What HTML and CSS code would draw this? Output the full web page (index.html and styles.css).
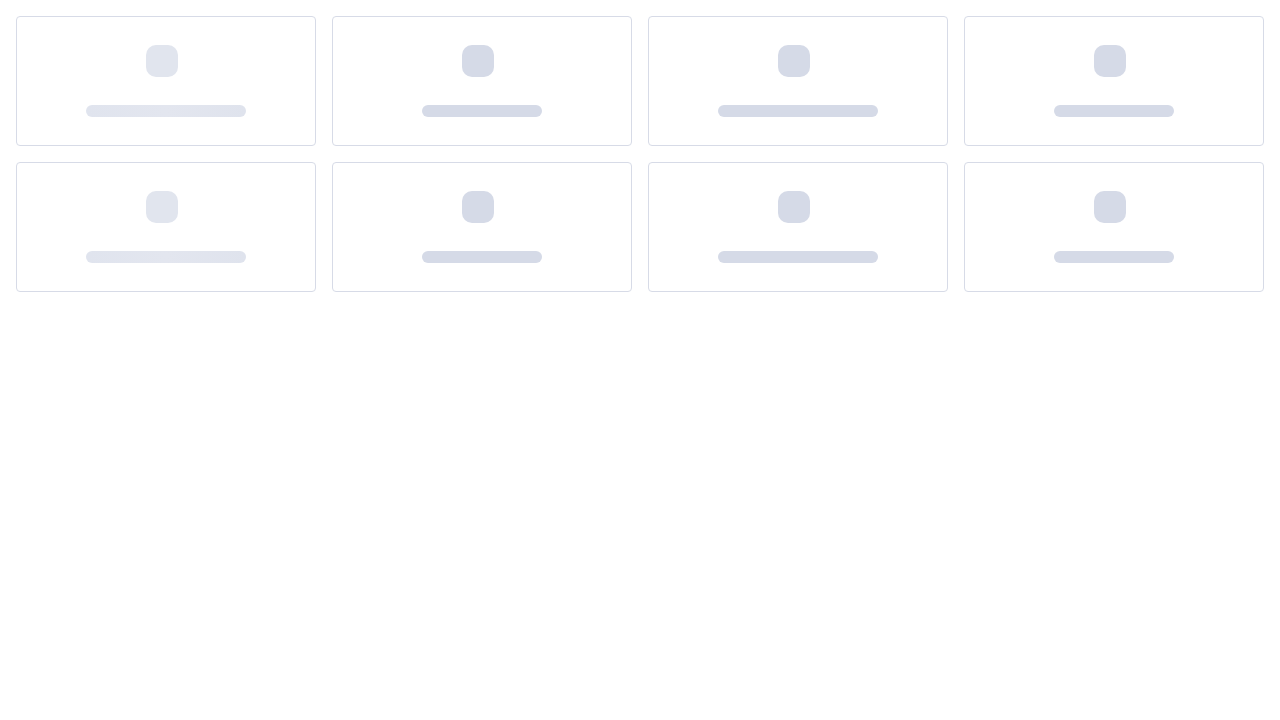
FILE: index.html
```html
<!DOCTYPE html>
<html lang="en">
<head>
<meta charset="utf-8">
<title>Loading</title>
<link rel="stylesheet" href="styles.css">
</head>
<body>
<main class="grid">
  <div class="card light"><span class="icon"></span><span class="bar wide"></span></div>
  <div class="card"><span class="icon"></span><span class="bar narrow"></span></div>
  <div class="card"><span class="icon"></span><span class="bar wide"></span></div>
  <div class="card"><span class="icon"></span><span class="bar narrow"></span></div>
  <div class="card light"><span class="icon"></span><span class="bar wide"></span></div>
  <div class="card"><span class="icon"></span><span class="bar narrow"></span></div>
  <div class="card"><span class="icon"></span><span class="bar wide"></span></div>
  <div class="card"><span class="icon"></span><span class="bar narrow"></span></div>
</main>
</body>
</html>
```
FILE: styles.css
```css
html, body {
  margin: 0;
  padding: 0;
  background: #ffffff;
  font-family: "Inter", "Liberation Sans", sans-serif;
}
.grid {
  display: grid;
  grid-template-columns: repeat(4, 300px);
  gap: 16px;
  padding: 16px;
}
.card {
  box-sizing: border-box;
  height: 130px;
  border: 1px solid #d7dbe7;
  border-radius: 4px;
  padding: 28px 0;
  display: flex;
  flex-direction: column;
  align-items: center;
  gap: 28px;
}
.icon {
  display: block;
  width: 32px;
  height: 32px;
  border-radius: 10px;
  background: #d5dae7;
  margin-right: 8px;
}
.bar {
  display: block;
  height: 12px;
  border-radius: 6px;
  background: #d5dae7;
}
.bar.wide { width: 160px; }
.bar.narrow { width: 120px; }
.card.light .icon { background: #e1e5ee; }
.card.light .bar { background: linear-gradient(90deg, #e0e4ee 0%, #e3e6ef 50%, #dfe3ed 100%); }
```
